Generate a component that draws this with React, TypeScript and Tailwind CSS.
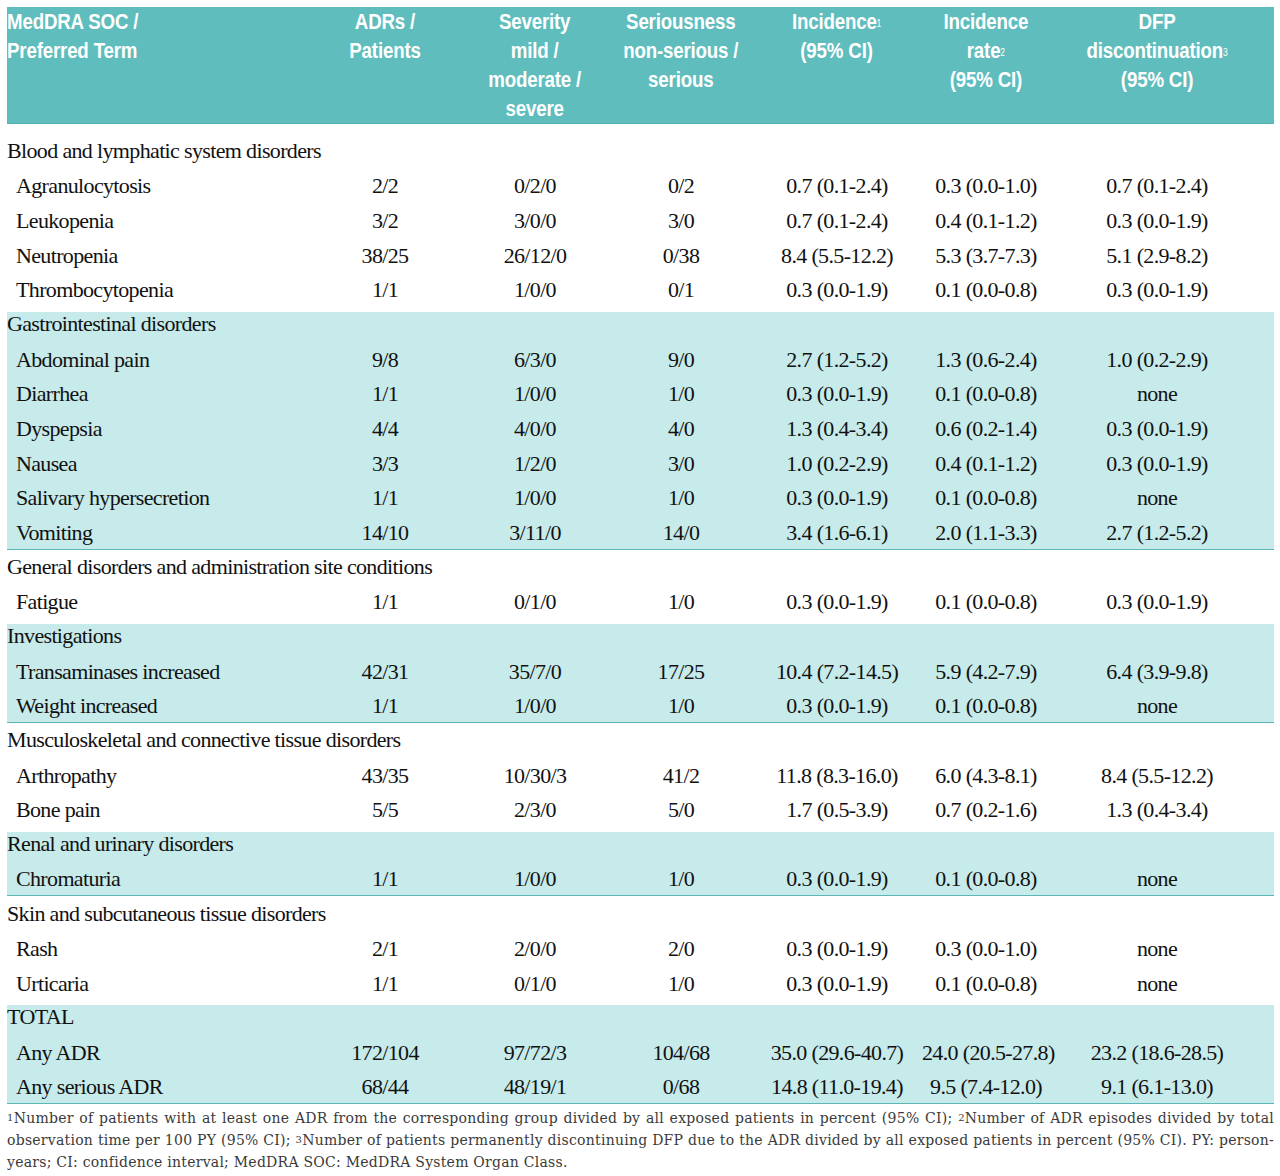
import React from "react";

// ============================================================
// ADR table — MedDRA SOC / Preferred Term breakdown
// ============================================================

type Row = [string, string, string, string, string, string, string];

interface Group {
  title: string;
  shaded?: boolean;
  rows: Row[];
}

const GROUPS: Group[] = [
  {
    title: "Blood and lymphatic system disorders",
    rows: [
      ["Agranulocytosis", "2/2", "0/2/0", "0/2", "0.7 (0.1-2.4)", "0.3 (0.0-1.0)", "0.7 (0.1-2.4)"],
      ["Leukopenia", "3/2", "3/0/0", "3/0", "0.7 (0.1-2.4)", "0.4 (0.1-1.2)", "0.3 (0.0-1.9)"],
      ["Neutropenia", "38/25", "26/12/0", "0/38", "8.4 (5.5-12.2)", "5.3 (3.7-7.3)", "5.1 (2.9-8.2)"],
      ["Thrombocytopenia", "1/1", "1/0/0", "0/1", "0.3 (0.0-1.9)", "0.1 (0.0-0.8)", "0.3 (0.0-1.9)"],
    ],
  },
  {
    title: "Gastrointestinal disorders",
    shaded: true,
    rows: [
      ["Abdominal pain", "9/8", "6/3/0", "9/0", "2.7 (1.2-5.2)", "1.3 (0.6-2.4)", "1.0 (0.2-2.9)"],
      ["Diarrhea", "1/1", "1/0/0", "1/0", "0.3 (0.0-1.9)", "0.1 (0.0-0.8)", "none"],
      ["Dyspepsia", "4/4", "4/0/0", "4/0", "1.3 (0.4-3.4)", "0.6 (0.2-1.4)", "0.3 (0.0-1.9)"],
      ["Nausea", "3/3", "1/2/0", "3/0", "1.0 (0.2-2.9)", "0.4 (0.1-1.2)", "0.3 (0.0-1.9)"],
      ["Salivary hypersecretion", "1/1", "1/0/0", "1/0", "0.3 (0.0-1.9)", "0.1 (0.0-0.8)", "none"],
      ["Vomiting", "14/10", "3/11/0", "14/0", "3.4 (1.6-6.1)", "2.0 (1.1-3.3)", "2.7 (1.2-5.2)"],
    ],
  },
  {
    title: "General disorders and administration site conditions",
    rows: [["Fatigue", "1/1", "0/1/0", "1/0", "0.3 (0.0-1.9)", "0.1 (0.0-0.8)", "0.3 (0.0-1.9)"]],
  },
  {
    title: "Investigations",
    shaded: true,
    rows: [
      ["Transaminases increased", "42/31", "35/7/0", "17/25", "10.4 (7.2-14.5)", "5.9 (4.2-7.9)", "6.4 (3.9-9.8)"],
      ["Weight increased", "1/1", "1/0/0", "1/0", "0.3 (0.0-1.9)", "0.1 (0.0-0.8)", "none"],
    ],
  },
  {
    title: "Musculoskeletal and connective tissue disorders",
    rows: [
      ["Arthropathy", "43/35", "10/30/3", "41/2", "11.8 (8.3-16.0)", "6.0 (4.3-8.1)", "8.4 (5.5-12.2)"],
      ["Bone pain", "5/5", "2/3/0", "5/0", "1.7 (0.5-3.9)", "0.7 (0.2-1.6)", "1.3 (0.4-3.4)"],
    ],
  },
  {
    title: "Renal and urinary disorders",
    shaded: true,
    rows: [["Chromaturia", "1/1", "1/0/0", "1/0", "0.3 (0.0-1.9)", "0.1 (0.0-0.8)", "none"]],
  },
  {
    title: "Skin and subcutaneous tissue disorders",
    rows: [
      ["Rash", "2/1", "2/0/0", "2/0", "0.3 (0.0-1.9)", "0.3 (0.0-1.0)", "none"],
      ["Urticaria", "1/1", "0/1/0", "1/0", "0.3 (0.0-1.9)", "0.1 (0.0-0.8)", "none"],
    ],
  },
  {
    title: "TOTAL",
    shaded: true,
    rows: [
      ["Any ADR", "172/104", "97/72/3", "104/68", "35.0 (29.6-40.7)", "24.0 (20.5-27.8)", "23.2 (18.6-28.5)"],
      ["Any serious ADR", "68/44", "48/19/1", "0/68", "14.8 (11.0-19.4)", "9.5 (7.4-12.0)", "9.1 (6.1-13.0)"],
    ],
  },
];

const GRID = "grid grid-cols-[303px_150px_150px_142px_170px_128px_214px]";
const SERIF = "font-['Liberation_Serif','Times_New_Roman',serif]";

function Sup({ children }: { children: React.ReactNode }) {
  return <sup className="text-[10px] font-normal relative -top-[2px]">{children}</sup>;
}

// condensed header cell: squeeze the bold sans horizontally
function HeadCell({ left, children }: { left?: boolean; children: React.ReactNode }) {
  return (
    <div className={left ? "text-left" : "text-center"}>
      <span
        className={`inline-block scale-x-[0.85] ${left ? "origin-left" : "origin-center"}`}
      >
        {children}
      </span>
    </div>
  );
}

function HeaderRow() {
  return (
    <div
      className={`${GRID} bg-[#5fbdbd] border-b border-[#56b2b2] h-[117px] text-white font-bold text-[22px] leading-[29px] tracking-[-0.2px] font-['Liberation_Sans',Arial,sans-serif]`}
    >
      <HeadCell left>
        MedDRA SOC /<br />
        Preferred Term
      </HeadCell>
      <HeadCell>
        ADRs /<br />
        Patients
      </HeadCell>
      <HeadCell>
        Severity
        <br />
        mild /<br />
        moderate /<br />
        severe
      </HeadCell>
      <HeadCell>
        Seriousness
        <br />
        non-serious /<br />
        serious
      </HeadCell>
      <HeadCell>
        Incidence<Sup>1</Sup>
        <br />
        (95% CI)
      </HeadCell>
      <HeadCell>
        Incidence
        <br />
        rate<Sup>2</Sup>
        <br />
        (95% CI)
      </HeadCell>
      <HeadCell>
        DFP
        <br />
        discontinuation<Sup>3</Sup>
        <br />
        (95% CI)
      </HeadCell>
    </div>
  );
}

function GroupBlock({ group }: { group: Group }) {
  const last = group.rows.length - 1;
  return (
    <div
      className={
        group.shaded ? "mt-[5px] bg-[#c7eaea] border-b border-[#5cb6b6]" : ""
      }
    >
      {/* SOC title row */}
      <div
        className={
          group.shaded
            ? "h-[29.67px] flex items-start"
            : "h-[34.67px] flex items-center"
        }
      >
        <span className="leading-[24px] whitespace-nowrap">{group.title}</span>
      </div>
      {group.rows.map((row, i) => (
        <div
          key={row[0]}
          className={`${GRID} items-center whitespace-nowrap ${
            group.shaded && i === last ? "h-[33.67px]" : "h-[34.67px]"
          }`}
        >
          <div className="pl-[9px]">{row[0]}</div>
          {row.slice(1).map((cell, j) => (
            <div key={j} className="text-center">
              {cell}
            </div>
          ))}
        </div>
      ))}
    </div>
  );
}

export default function App() {
  return (
    <div className="w-[1280px] h-[1176px] bg-white pt-[7px] pl-[7px] overflow-hidden">
      <div className="w-[1267px]">
        <HeaderRow />
        <div
          className={`${SERIF} text-[22px] text-[#111] tracking-[-0.65px] pt-[10px]`}
        >
          {GROUPS.map((g) => (
            <GroupBlock key={g.title} group={g} />
          ))}
        </div>
        <div
          className="font-['DejaVu_Serif',serif] text-[14px] leading-[22px] text-[#3a3a3a] tracking-[0.25px] mt-[3px]"
        >
          <p className="text-justify [text-align-last:justify] whitespace-nowrap">
            <Sup>1</Sup>Number of patients with at least one ADR from the corresponding group
            divided by all exposed patients in percent (95% CI); <Sup>2</Sup>Number of ADR
            episodes divided by total
          </p>
          <p className="text-justify [text-align-last:justify] whitespace-nowrap">
            observation time per 100 PY (95% CI); <Sup>3</Sup>Number of patients permanently
            discontinuing DFP due to the ADR divided by all exposed patients in percent (95% CI).
            PY: person-
          </p>
          <p>years; CI: confidence interval; MedDRA SOC: MedDRA System Organ Class.</p>
        </div>
      </div>
    </div>
  );
}
